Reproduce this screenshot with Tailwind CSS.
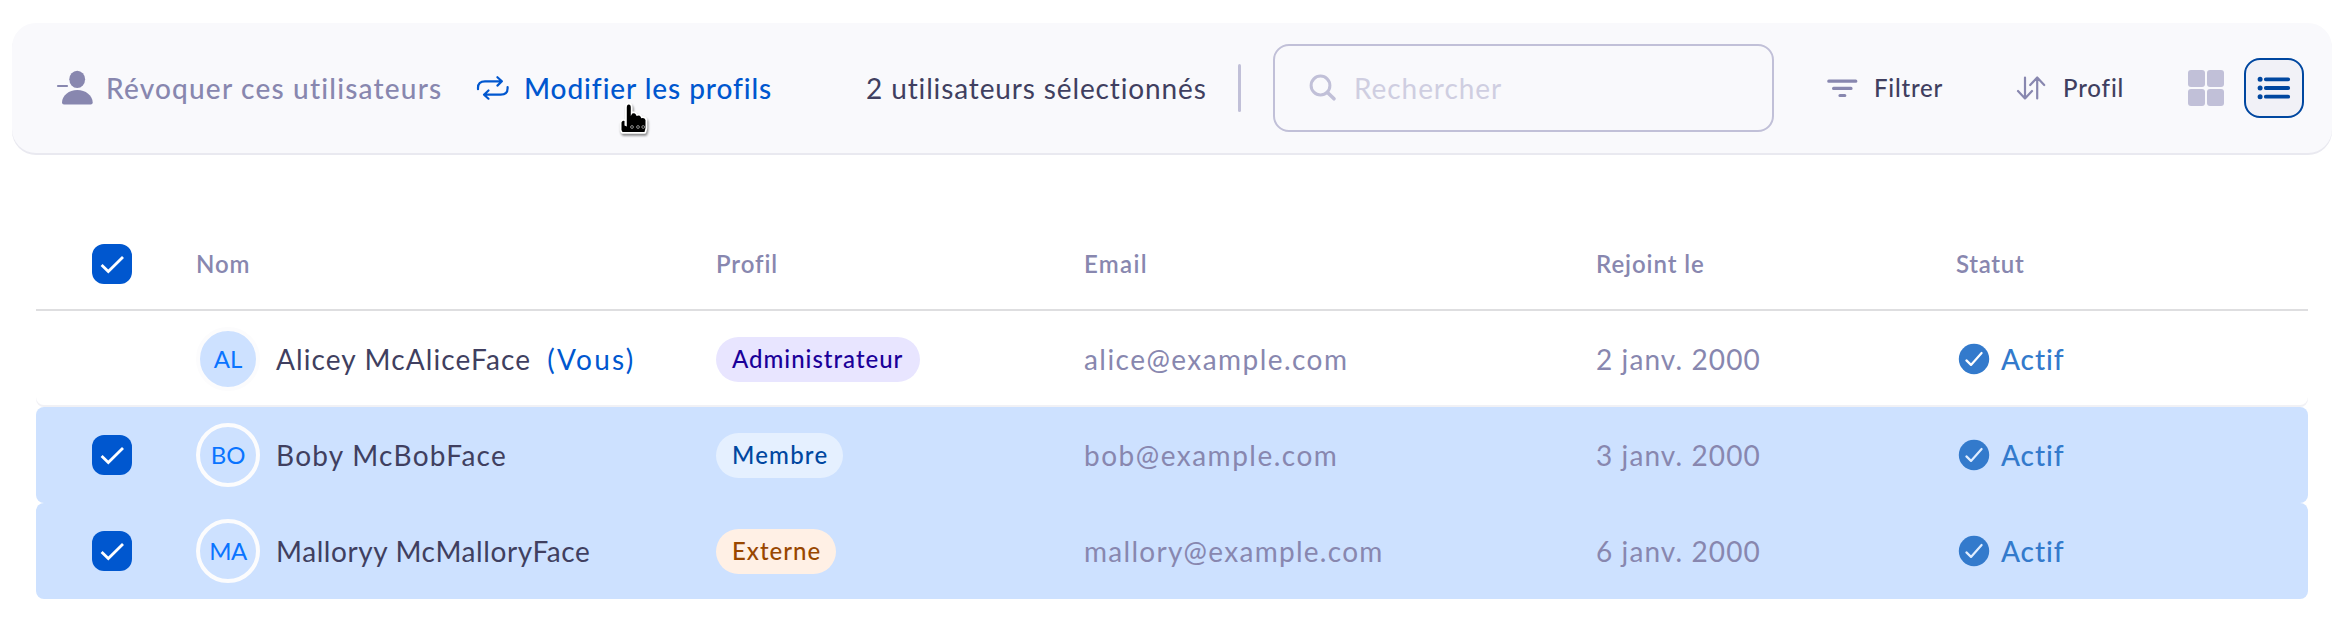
<!DOCTYPE html>
<html lang="fr">
<head>
<meta charset="utf-8">
<title>Utilisateurs</title>
<script src="https://cdn.jsdelivr.net/npm/@tailwindcss/browser@4"></script>
</head>
<body class="w-[2338px] h-[620px] overflow-hidden bg-white font-['Lato',sans-serif] text-[28px] leading-9 text-[#403f60] whitespace-nowrap">
<svg class="hidden">
  <symbol id="check-box" viewBox="0 0 40 40"><rect width="40" height="40" rx="12" fill="#0057cf"/><path d="M9.6 21l6.700 6.600L31 12.900" fill="none" stroke="#fff" stroke-width="2.800"/></symbol>
  <symbol id="status-ok" viewBox="0 0 36 36"><circle cx="18" cy="18" r="15.200" fill="#337acc"/><path d="M10.400 19.400l4.600 4.500L25.600 12" fill="none" stroke="currentColor" stroke-width="2.200" stroke-linecap="round" stroke-linejoin="round"/></symbol>
</svg>

<header class="mt-[23px] ml-3 w-[2320px] h-[130px] pl-11 flex items-center rounded-[24px] bg-[#f9f9fc] shadow-[0_2px_0_#e9e9f0]">
  <button class="w-[420px] flex items-center text-[#8887af] font-medium">
    <svg class="w-[50px] h-10 shrink-0" viewBox="0 0 50 40" fill="currentColor"><ellipse cx="21.200" cy="11.300" rx="7.900" ry="8.600"/><path d="M6 34.600C6 27.500 13 22 21.300 22s15.400 5.500 15.400 12.600q0 2-2 2H8q-2 0-2-2z"/><path d="M2 18h9" stroke="currentColor" stroke-width="2.200" stroke-linecap="round"/></svg>
    <span class="tracking-[1.2px]">Révoquer ces utilisateurs</span>
  </button>
  <button class="relative w-[390px] flex items-center text-[#0057cf] font-medium">
    <svg class="w-12 h-8 shrink-0" viewBox="0 0 48 32" fill="none" stroke="currentColor" stroke-width="2.200" stroke-linecap="round" stroke-linejoin="round"><path d="M2 17.200v-1.400q0-6.500 7-6.500h16.500M21.400 5.200l4.500 4.100-4.500 4.300M31.600 15v1.300q0 6.400-7 6.400H8M12.500 18.500L8 22.700l4.500 4"/></svg>
    <span class="tracking-[0.92px]">Modifier les profils</span>
    <svg class="absolute left-[136px] top-[27px] w-[46px] h-[46px] drop-shadow-[1px_2px_1px_rgba(0,0,0,0.45)]" viewBox="0 0 46 46"><path d="M14.800 10.500q0-3 2-3t2 3v8.500l1.500-2.500q2.500-.8 3.500 1l.8 1.500q3-1.200 4 .8l.7 1.500q3.200-1 4.200 1.700V31l-1 4H10.500L9.500 33v-7.500q.8-2.500 3-1.500v4.500l2.300 1z" fill="#000" stroke="#fff" stroke-width="3.600" stroke-linejoin="round" paint-order="stroke"/><g fill="none" stroke="#999" stroke-width=".9"><circle cx="20" cy="30" r="1.400"/><circle cx="26" cy="30" r="1.400"/><circle cx="31.200" cy="30" r="1.400"/></g></svg>
  </button>
  <span class="w-[372px] tracking-[0.87px]">2 utilisateurs sélectionnés</span>
  <span class="w-[3px] h-12 rounded-full bg-[#c1c0d8]"></span>
  <div class="ml-8 w-[501px] h-22 pl-[31px] flex items-center rounded-[16px] border-2 border-[#c1c0d8] text-[#cfcee1]">
    <svg class="w-12 h-11 shrink-0 text-[#c1c0d8]" viewBox="0 0 48 44" fill="none" stroke="currentColor" stroke-width="3" stroke-linecap="round"><circle cx="14.500" cy="19.500" r="9.400"/><path d="M21.500 26.500l6.500 6.300" stroke-width="3.600"/></svg>
    <span class="tracking-[0.93px]">Rechercher</span>
  </div>
  <button class="ml-[50px] w-[190px] flex items-center text-2xl font-medium">
    <svg class="w-[50px] h-6 shrink-0 text-[#8887af]" viewBox="0 0 50 24" fill="none" stroke="currentColor" stroke-width="3.200" stroke-linecap="round"><path d="M4.800 5.200h27M9.600 12.400h17.400M16 19.500h4.800"/></svg>
    <span class="tracking-[0.78px]">Filtrer</span>
  </button>
  <button class="w-[174px] flex items-center text-2xl font-medium">
    <svg class="w-[49px] h-6 shrink-0 text-[#8887af]" viewBox="0 0 49 24" fill="none" stroke="currentColor" stroke-width="2.200" stroke-linecap="round" stroke-linejoin="round"><path d="M11 1.500v21M4 15l7 7.500 7-7.500M23.200 22.500v-21M16.200 9l7-7.500 7 7.500"/></svg>
    <span class="tracking-[0.85px]">Profil</span>
  </button>
  <div class="grid grid-cols-2 gap-0.5 w-9 h-9">
    <span class="rounded-[3px] bg-[#c1c0d8]"></span><span class="rounded-[3px] bg-[#c1c0d8]"></span>
    <span class="rounded-[3px] bg-[#c1c0d8]"></span><span class="rounded-[3px] bg-[#c1c0d8]"></span>
  </div>
  <button class="ml-5 size-[60px] rounded-[16px] border-2 border-[#0047a0] bg-[#f1f1f7] flex items-center justify-center">
    <svg class="w-9 h-6 text-[#0047a0]" viewBox="0 0 36 24" fill="none" stroke="currentColor" stroke-width="3.800" stroke-linecap="round"><path d="M9.800 3.300h22.400M9.800 12h22.400M9.800 20.700h22.400"/><path d="M4.100 3.300h.01M4.100 12h.01M4.100 20.700h.01" stroke-width="5"/></svg>
  </button>
</header>

<main class="mt-[66px] ml-9 w-[2272px]">
  <div class="h-[92px] pl-14 grid grid-cols-[104px_520px_368px_512px_360px_1fr] items-center border-b-2 border-[#dedee0] text-2xl font-semibold text-[#8887af]">
    <svg class="size-10"><use href="#check-box"/></svg>
    <span class="tracking-[0.9px]">Nom</span>
    <span class="tracking-[0.92px]">Profil</span>
    <span class="tracking-[1.3px]">Email</span>
    <span class="tracking-[0.93px]">Rejoint le</span>
    <span class="tracking-[0.7px]">Statut</span>
  </div>

  <div class="h-24 pl-14 grid grid-cols-[104px_520px_368px_512px_360px_1fr] items-center rounded-[8px] shadow-[inset_0_-2px_0_#f1f1f5]">
    <span></span>
    <div class="flex items-center">
      <span class="size-16 rounded-full border-4 border-[#fcfcfd] bg-[#cde1ff] flex items-center justify-center text-2xl text-[#0a74ff]">AL</span>
      <span class="ml-4 tracking-[1.12px]">Alicey McAliceFace</span>
      <span class="ml-4 tracking-[2.2px] text-[#0057cf]">(Vous)</span>
    </div>
    <div><span class="inline-block h-[45px] px-4 leading-[44px] rounded-full bg-[#e8e5ff] text-[#1a0099] text-2xl font-medium tracking-[0.98px] w-[204px] align-top">Administrateur</span></div>
    <span class="tracking-[1.45px] text-[#8887af]">alice@example.com</span>
    <span class="tracking-[1.1px] text-[#8887af]">2 janv. 2000</span>
    <div class="flex items-center gap-[9px] text-[#337acc] font-medium"><svg class="size-9 text-white"><use href="#status-ok"/></svg><span class="tracking-[0.9px]">Actif</span></div>
  </div>

  <div class="h-24 pl-14 grid grid-cols-[104px_520px_368px_512px_360px_1fr] items-center rounded-[8px] bg-[#cde1ff]">
    <svg class="size-10"><use href="#check-box"/></svg>
    <div class="flex items-center">
      <span class="size-16 rounded-full border-4 border-[#fcfcfd] bg-[#cde1ff] flex items-center justify-center text-2xl text-[#0a74ff]">BO</span>
      <span class="ml-4 tracking-[1.25px]">Boby McBobFace</span>
    </div>
    <div><span class="inline-block h-[45px] px-4 leading-[44px] rounded-full bg-[#e5f0ff] text-[#0047a0] text-2xl font-medium tracking-[1.2px] w-[127px] align-top">Membre</span></div>
    <span class="tracking-[1.5px] text-[#8887af]">bob@example.com</span>
    <span class="tracking-[1.1px] text-[#8887af]">3 janv. 2000</span>
    <div class="flex items-center gap-[9px] text-[#337acc] font-medium"><svg class="size-9 text-[#e0edff]"><use href="#status-ok"/></svg><span class="tracking-[0.9px]">Actif</span></div>
  </div>

  <div class="h-24 pl-14 grid grid-cols-[104px_520px_368px_512px_360px_1fr] items-center rounded-[8px] bg-[#cde1ff]">
    <svg class="size-10"><use href="#check-box"/></svg>
    <div class="flex items-center">
      <span class="size-16 rounded-full border-4 border-[#fcfcfd] bg-[#cde1ff] flex items-center justify-center text-2xl text-[#0a74ff] -tracking-[0.5px]">MA</span>
      <span class="ml-4 tracking-[0.59px]">Malloryy McMalloryFace</span>
    </div>
    <div><span class="inline-block h-[45px] px-4 leading-[44px] rounded-full bg-[#fff0e5] text-[#994700] text-2xl font-medium tracking-[1px] w-[120px] align-top">Externe</span></div>
    <span class="tracking-[1.28px] text-[#8887af]">mallory@example.com</span>
    <span class="tracking-[1.1px] text-[#8887af]">6 janv. 2000</span>
    <div class="flex items-center gap-[9px] text-[#337acc] font-medium"><svg class="size-9 text-[#e0edff]"><use href="#status-ok"/></svg><span class="tracking-[0.9px]">Actif</span></div>
  </div>
</main>
</body>
</html>
